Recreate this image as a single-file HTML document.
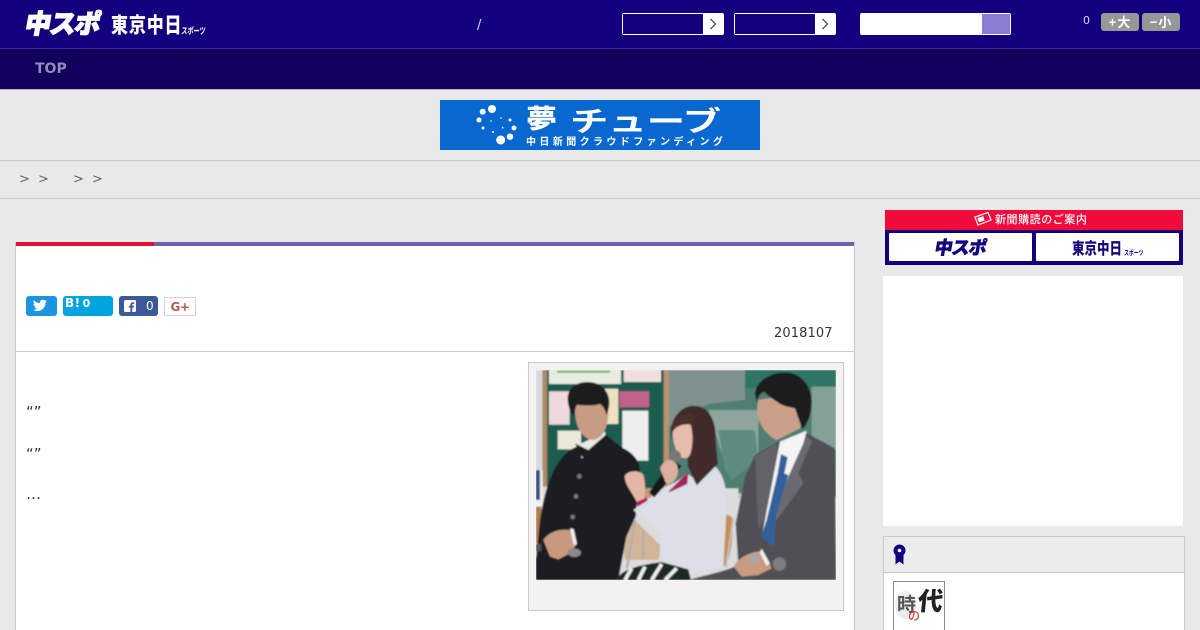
<!DOCTYPE html>
<html lang="ja"><head><meta charset="utf-8"><title>中スポ</title>
<style>
*{box-sizing:border-box}
html,body{margin:0;padding:0;width:1200px;height:630px;overflow:hidden;background:#e9e9e9;font-family:"DejaVu Sans","Noto Sans CJK JP",sans-serif}
#w{position:absolute;left:0;top:0;width:1200px;height:630px;overflow:hidden}
.a{position:absolute}
.sel{position:absolute;top:13px;width:102px;height:22px;background:#fff;border-radius:2px;border:1px solid #fff}
.sel i{position:absolute;left:0;top:0;width:80px;height:20px;background:#12007f;display:block}
.sel svg{position:absolute;left:86px;top:4px}
.logo{position:absolute;font-family:"Noto Sans CJK JP",sans-serif;font-weight:900;white-space:nowrap;transform-origin:0 0}
.sb{position:absolute;top:296px;height:20px;border-radius:3px;color:#fff}
</style></head><body><div id="w">
<div class="a" style="left:0;top:0;width:1200px;height:48px;background:#12007f"></div>
<div class="a" style="left:0;top:48px;width:1200px;height:1px;background:#3d2f95"></div>
<div class="a" style="left:0;top:49px;width:1200px;height:40px;background:#10005c"></div>
<div class="a" style="left:0;top:89px;width:1200px;height:1px;background:#b9b5cf"></div>

<div class="logo" style="left:29px;top:3px;font-size:26px;line-height:40px;color:#fff;transform:skewX(-10deg);letter-spacing:-1.200px;-webkit-text-stroke:1.300px #fff">中スポ</div>
<div class="logo" style="left:111px;top:5px;font-size:20px;line-height:36px;color:#fff;transform:scale(.85,1.05);letter-spacing:1px;font-weight:900">東京中日</div>
<div class="logo" style="left:182px;top:23px;font-size:9px;line-height:16px;color:#fff;transform:scaleX(.68) skewX(-8deg);font-weight:700">スポーツ</div>

<div class="a" style="left:35px;top:60px;font-size:14px;line-height:18px;font-weight:700;color:#928cb8">TOP</div>
<div class="a" style="left:477px;top:18px;font-size:13px;line-height:16px;color:#dcdcf0">/</div>

<div class="sel" style="left:622px"><i></i><svg width="8" height="12" viewBox="0 0 8 12"><path d="M1.500 1L6.500 6L1.500 11" fill="none" stroke="#333" stroke-width="1.100"/></svg></div>
<div class="sel" style="left:734px"><i></i><svg width="8" height="12" viewBox="0 0 8 12"><path d="M1.500 1L6.500 6L1.500 11" fill="none" stroke="#333" stroke-width="1.100"/></svg></div>
<div class="a" style="left:860px;top:13px;width:151px;height:22px;background:#fff;border-radius:2px"></div>
<div class="a" style="left:982px;top:14px;width:28px;height:20px;background:#8a7dd4"></div>

<div class="a" style="left:1083px;top:14px;font-size:11px;line-height:14px;color:#d8d8ee">0</div>
<div class="a" style="left:1101px;top:13px;width:38px;height:18px;background:#979797;border-radius:3px;color:#fff;font:700 13px/18px 'Noto Sans CJK JP',sans-serif;text-align:center;letter-spacing:1px">+大</div>
<div class="a" style="left:1142px;top:13px;width:38px;height:18px;background:#979797;border-radius:3px;color:#fff;font:700 13px/18px 'Noto Sans CJK JP',sans-serif;text-align:center;letter-spacing:1px">−小</div>

<!-- yume tube banner -->
<div class="a" style="left:440px;top:100px;width:320px;height:50px;background:#0868cf;overflow:hidden">
<svg class="a" style="left:0;top:0" width="320" height="50" viewBox="0 0 320 50" fill="#fff">
<circle cx="52" cy="9" r="4"/><circle cx="42.700" cy="11.700" r="3"/><circle cx="39" cy="20" r="2.500"/><circle cx="43" cy="28" r="1.500"/><circle cx="53" cy="32" r="1"/><circle cx="51" cy="21" r=".8"/><circle cx="61" cy="18" r=".8"/><circle cx="70" cy="20" r="1.500"/><circle cx="62.700" cy="27.700" r=".8"/><circle cx="74" cy="28" r="2.500"/><circle cx="60.700" cy="40" r="4.500"/><circle cx="70" cy="36.700" r="3.200"/>
</svg>
<div class="a" style="left:86px;top:-4px;font:900 31px/42px 'Noto Sans CJK JP',sans-serif;color:#fff;white-space:nowrap;transform:scaleY(.85)">夢</div>
<div class="a" style="left:130px;top:-1px;font:700 28px/42px 'Noto Sans CJK JP',sans-serif;color:#fff;white-space:nowrap;transform:scaleX(1.370);transform-origin:0 0">チューブ</div>
<div class="a" style="left:86px;top:33px;font:700 10px/15px 'Noto Sans CJK JP',sans-serif;color:#fff;white-space:nowrap;letter-spacing:3.400px">中日新聞クラウドファンディング</div>
</div>

<!-- breadcrumb -->
<div class="a" style="left:0;top:160px;width:1200px;height:1px;background:#c9c9c9"></div>
<div class="a" style="left:0;top:198px;width:1200px;height:1px;background:#c9c9c9"></div>
<div class="a" style="left:19px;top:171px;font-size:13px;line-height:17px;color:#666;white-space:nowrap">&gt;</div>
<div class="a" style="left:38px;top:171px;font-size:13px;line-height:17px;color:#666">&gt;</div>
<div class="a" style="left:73px;top:171px;font-size:13px;line-height:17px;color:#666">&gt;</div>
<div class="a" style="left:92px;top:171px;font-size:13px;line-height:17px;color:#666">&gt;</div>

<!-- article -->
<div class="a" style="left:15px;top:242px;width:840px;height:400px;background:#fff;border:1px solid #c9c9c9;border-top:0"></div>
<div class="a" style="left:16px;top:242px;width:838px;height:4px;background:#6e63a8"></div>
<div class="a" style="left:16px;top:242px;width:138px;height:4px;background:#e0103a"></div>

<div class="sb" style="left:26px;width:31px;background:#1b95e0">
<svg class="a" style="left:6px;top:2px" width="16" height="15" viewBox="0 0 24 24"><path fill="#fff" d="M23 4.900c-.8.400-1.700.600-2.600.700.900-.6 1.600-1.400 2-2.500-.9.500-1.900.900-2.900 1.100C18.700 3.300 17.500 2.700 16.200 2.700c-2.500 0-4.600 2.100-4.600 4.600 0 .400 0 .700.100 1C7.900 8.100 4.500 6.300 2.200 3.500c-.4.700-.6 1.500-.6 2.300 0 1.600.8 3 2 3.800-.8 0-1.500-.2-2.100-.6v.100c0 2.200 1.600 4.100 3.700 4.500-.4.100-.8.200-1.200.2-.3 0-.6 0-.9-.1.600 1.800 2.300 3.200 4.300 3.200-1.600 1.200-3.500 2-5.700 2-.4 0-.7 0-1.100-.1 2 1.300 4.500 2.100 7.100 2.100 8.500 0 13.100-7 13.100-13.100v-.6c.9-.6 1.700-1.400 2.300-2.300z"/></svg></div>
<div class="sb" style="left:63px;width:50px;background:#00a4de;font:700 12px/14px 'DejaVu Sans',sans-serif;padding-left:2px;letter-spacing:.5px">B!<span style="font-size:11px;margin-left:2px">0</span></div>
<div class="sb" style="left:119px;width:39px;background:#3b5998">
<svg class="a" style="left:5px;top:4px" width="12" height="12" viewBox="0 0 12 12"><rect width="12" height="12" rx="1.500" fill="#fff"/><path fill="#3b5998" d="M8.300 12V7.500h1.500l.2-1.800H8.300V4.700c0-.5.200-.8.900-.8h1V2.300c-.2 0-.8-.1-1.400-.1-1.400 0-2.400.9-2.400 2.400v1.100H4.800v1.800h1.600V12z"/></svg>
<span class="a" style="left:27px;top:2px;font-size:12px;line-height:16px">0</span></div>
<div class="a" style="left:164px;top:297px;width:32px;height:19px;background:#fff;border:1px solid #d3d3d3;border-radius:1px;color:#bb5a4f;font:700 12px/19px 'DejaVu Sans',sans-serif;text-align:center;letter-spacing:-.5px">G+</div>

<div class="a" style="left:774px;top:326px;font-size:13px;line-height:16px;letter-spacing:.1px;color:#333">2018107</div>
<div class="a" style="left:16px;top:351px;width:838px;height:1px;background:#c9c9c9"></div>

<div class="a" style="left:26px;top:403px;font-size:15px;line-height:18px;color:#333">“”</div>
<div class="a" style="left:26px;top:445px;font-size:15px;line-height:18px;color:#333">“”</div>
<div class="a" style="left:26px;top:485px;font-size:15px;line-height:18px;color:#333">…</div>

<!-- photo box -->
<div class="a" style="left:528px;top:362px;width:316px;height:249px;background:#f2f2f2;border:1px solid #c9c9c9"></div>
<svg class="a" style="left:536px;top:370px" width="300" height="210" viewBox="33 30 900 630">
<defs><filter id="b" x="-5%" y="-5%" width="110%" height="110%"><feGaussianBlur stdDeviation="2.500"/></filter></defs>
<g filter="url(#b)">
<rect x="33" y="30" width="900" height="630" fill="#d8dade"/>
<rect x="52" y="30" width="14" height="350" fill="#b08a68"/>
<rect x="66" y="30" width="352" height="360" fill="#1f5c50"/>
<rect x="416" y="30" width="16" height="380" fill="#b89272"/>
<rect x="72" y="30" width="216" height="42" fill="#e6ecdf"/><rect x="96" y="32" width="160" height="6" fill="#6fb04f"/>
<rect x="296" y="30" width="112" height="36" fill="#f0dfe0"/>
<rect x="72" y="94" width="62" height="100" fill="#efd9dd"/>
<rect x="240" y="86" width="40" height="106" fill="#ece2c2"/>
<rect x="284" y="94" width="88" height="48" fill="#c4608c"/>
<rect x="292" y="152" width="78" height="150" fill="#eeeeee"/>
<rect x="98" y="212" width="70" height="56" fill="#ece8d8"/>
<!-- chalkboard -->
<rect x="432" y="30" width="501" height="380" fill="#4f7e72"/>
<path d="M432 30H660V120L560 130L480 160L432 200Z" fill="#7f928f"/>
<rect x="660" y="30" width="273" height="55" fill="#2e7565"/>
<path d="M550 150H700V280H590Z" fill="#8fa69f"/>
<path d="M580 210H690L700 300L620 360L600 330Z" fill="#5f8c80"/>
<rect x="860" y="80" width="73" height="190" fill="#84a198"/>
<rect x="600" y="400" width="120" height="14" fill="#c8cbb8"/>
<rect x="33" y="330" width="20" height="110" fill="#eef0f2"/>
<rect x="33" y="330" width="12" height="90" fill="#3a4f78"/>
<rect x="33" y="440" width="16" height="110" fill="#b27b4e"/>
<rect x="280" y="385" width="360" height="275" fill="#dcdcdc"/>
<path d="M340 385H430V400L350 420Z" fill="#c49a72"/>
<path d="M290 530L330 480L410 560L400 600L300 600Z" fill="#d2b598"/>
<!-- left boy jacket -->
<path d="M33 660V600L45 480C60 380 90 290 150 262L240 222L290 262C330 280 348 310 344 340L332 470L304 530L280 660Z" fill="#1d1e20"/>
<path d="M160 255L240 215L246 240L170 295Z" fill="#e8e8e4"/>
<path d="M150 250L170 290L195 295L250 235L245 222L190 270Z" fill="#1a1b1d"/>
<circle cx="163" cy="349" r="7" fill="#777"/><circle cx="153" cy="409" r="7" fill="#777"/><circle cx="143" cy="471" r="7" fill="#777"/>
<path d="M150 150C150 210 180 240 205 240C235 235 250 200 250 150L240 120L160 120Z" fill="#c89b83"/>
<path d="M128 120C126 80 160 64 192 66C230 68 254 95 253 130C252 145 248 155 245 165C240 150 236 140 225 132C200 140 170 135 155 135C150 145 148 160 146 168C135 155 130 140 128 120Z" fill="#1b1a1c"/>
<!-- hands left -->
<path d="M55 540C75 510 115 505 145 512L155 552L135 580L100 598L75 590Z" fill="#c79a7f"/>
<path d="M135 505L146 507L156 552L146 556Z" fill="#f0f0f0"/>
<ellipse cx="148" cy="578" rx="20" ry="13" fill="#8a8a8c"/>
<rect x="33" y="552" width="16" height="22" fill="#555"/>
<!-- chair -->
<path d="M306 625L330 480" stroke="#b0b0b0" stroke-width="7" fill="none"/>
<path d="M355 590V510" stroke="#aaa" stroke-width="5" fill="none"/>
<path d="M597 620C618 600 628 520 620 470L600 462L585 500L590 610Z" fill="#c98d50"/>
<path d="M603 622L625 475" stroke="#c2c2c2" stroke-width="6" fill="none"/>
<!-- jacket -->
<path d="M325 450L420 380C440 372 460 365 485 340L525 368L560 312C590 330 604 370 604 420C604 500 596 580 596 620L490 645L405 600L405 520Z" fill="#dcdfe5"/>
<path d="M430 395L490 335L487 372L435 396Z" fill="#a8205e"/>
<path d="M332 428L364 410L368 422L338 440Z" fill="#a8205e"/>
<!-- woman hair + face -->
<path d="M437 210C445 160 480 132 515 138C555 142 575 190 572 240C574 280 580 305 578 312L515 376L488 318L490 230Z" fill="#40292a"/>
<path d="M443 215C450 200 470 192 495 188C505 215 505 255 495 285C485 300 470 295 460 285C450 265 442 240 443 215Z" fill="#e6bcad"/>
<path d="M437 215C445 175 480 150 510 165L500 195C480 190 455 195 443 215L440 245Z" fill="#46302c"/>
<!-- mic and hand woman -->
<path d="M372 398L440 300L470 318L388 412Z" fill="#121214"/>
<circle cx="451" cy="288" r="17" fill="#7b7678"/>
<path d="M405 325C420 290 450 295 458 320C462 345 450 370 430 372L422 368Z" fill="#dcaf9c"/>
<path d="M299 350C300 335 340 325 355 345C362 370 360 400 360 415L335 425C320 395 300 375 299 350Z" fill="#e4b6a4"/>
<!-- skirt -->
<path d="M275 660C285 630 340 615 410 606L490 628L498 660Z" fill="#1e2a26"/>
<path d="M300 660L320 625M340 660L360 620M380 660L410 612M420 660L455 625" stroke="#eeeeea" stroke-width="11" fill="none"/>
<!-- right man suit -->
<path d="M490 660C540 645 600 635 640 615L632 490L660 350L690 285L760 245L850 222L930 265L933 660Z" fill="#4f4f54"/>
<path d="M690 290L755 250V400L700 510Z" fill="#626267"/>
<path d="M840 222L860 245L820 340L835 370L740 500L790 310Z" fill="#6a6a6f"/>
<path d="M765 245L845 212L835 250L790 350L730 500L712 520Z" fill="#f4f4f4"/>
<path d="M768 282L788 292L778 340L790 345L752 470L748 560L708 530L725 480L758 340Z" fill="#33619b"/>
<path d="M700 120C690 160 700 210 755 240L825 205L840 150L760 110Z" fill="#caa08a"/>
<path d="M690 100C695 60 740 34 790 38C835 44 862 85 860 130C858 170 845 195 832 208L810 145C790 140 775 140 755 125C740 115 725 105 718 95C705 100 698 110 695 130Z" fill="#1c1a1b"/>
<path d="M626 620C640 590 690 570 715 575L740 625L700 645L650 650Z" fill="#c99b82"/>
<path d="M710 566L735 610L725 618L704 578Z" fill="#f0f0f0"/>
<circle cx="687" cy="594" r="14" fill="#a9a9ac"/>
<circle cx="763" cy="612" r="20" fill="#7e7e80"/>
</g>
</svg>

<!-- subscribe banner -->
<div class="a" style="left:885px;top:210px;width:298px;height:55px;background:#12007f"></div>
<div class="a" style="left:885px;top:210px;width:298px;height:20px;background:#f10a3c;color:#fff;font:500 11px/19px 'Noto Sans CJK JP',sans-serif;text-align:left;padding-left:110px;letter-spacing:.55px;white-space:nowrap">新聞購読のご案内</div>
<svg class="a" style="left:973px;top:211px" width="20" height="17" viewBox="0 0 20 17"><path d="M2 6L15 1.500L18 9L5 14Z" fill="none" stroke="#fff" stroke-width="1.200"/><rect x="5" y="6" width="6" height="4.500" fill="#fff" transform="rotate(-18 8 8)"/></svg>
<div class="a" style="left:889px;top:233px;width:143px;height:28px;background:#fff;border-radius:1px;text-align:center;color:#14067f;font:900 18px/28px 'Noto Sans CJK JP',sans-serif;letter-spacing:-1px;-webkit-text-stroke:.6px #14067f"><span style="display:inline-block;transform:skewX(-10deg)">中スポ</span></div>
<div class="a" style="left:1036px;top:233px;width:143px;height:28px;background:#fff;border-radius:1px"></div>
<div class="a" style="left:1072px;top:233px;color:#14067f;font:900 16px/28px 'Noto Sans CJK JP',sans-serif;white-space:nowrap;transform:scaleX(.78);transform-origin:0 0">東京中日</div>
<div class="a" style="left:1124px;top:247px;color:#14067f;font:700 7px/12px 'Noto Sans CJK JP',sans-serif;white-space:nowrap;transform:scaleX(.7);transform-origin:0 0">スポーツ</div>

<div class="a" style="left:883px;top:276px;width:300px;height:250px;background:#fff"></div>

<!-- ranking box -->
<div class="a" style="left:883px;top:536px;width:302px;height:94px;background:#fff;border:1px solid #c9c9c9;border-bottom:0"></div>
<div class="a" style="left:884px;top:537px;width:300px;height:36px;background:#ececec;border-bottom:1px solid #c9c9c9"></div>
<svg class="a" style="left:893px;top:544px" width="13" height="21" viewBox="0 0 13 21"><path d="M2.500 10V20.500L6.500 17.500L10.500 20.500V10Z" fill="#12007f"/><circle cx="6.500" cy="6.500" r="6" fill="#12007f"/><circle cx="6.500" cy="6.500" r="1.800" fill="#fff"/></svg>
<div class="a" style="left:893px;top:581px;width:52px;height:49px;background:#fff;border:1px solid #8a8a8a;border-bottom:0;overflow:hidden">
<div class="a" style="left:1px;top:9px;width:21px;height:28px;border-radius:50%;background:#ececec"></div>
<div class="a" style="left:3px;top:9px;font:700 19px/26px 'Noto Sans CJK JP',sans-serif;color:#555">時</div>
<div class="a" style="left:24px;top:1px;font:900 25px/34px 'Noto Sans CJK JP',sans-serif;color:#222;transform:skewX(-6deg)">代</div>
<div class="a" style="left:14px;top:26px;font:500 12px/16px 'Noto Sans CJK JP',sans-serif;color:#c8473f">の</div>
</div>
</div></body></html>
